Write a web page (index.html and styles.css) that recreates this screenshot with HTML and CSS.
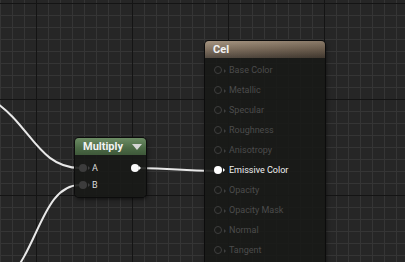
FILE: index.html
```html
<!DOCTYPE html>
<html lang="en">
<head>
    <meta charset="UTF-8">
    <title>Material Graph</title>
    <link rel="stylesheet" href="styles.css">
</head>
<body>
    <div class="graph">
        <svg class="wires" width="405" height="262" viewBox="0 0 405 262">
            <path d="M -70 84 C 30 84 22 168 80 168" />
            <path d="M -40 300 C 40 300 30 185 80 185" />
            <path d="M 136 168 C 178 168 176 171 216 171" />
        </svg>

        <div class="node multiply">
            <div class="node-header">
                <span class="node-title">Multiply</span>
                <span class="caret"></span>
            </div>
            <div class="node-body">
                <div class="row">
                    <div class="pin-in">
                        <span class="pin filled"></span>
                        <span class="label">A</span>
                    </div>
                    <span class="pin out"></span>
                </div>
                <div class="row">
                    <div class="pin-in">
                        <span class="pin filled"></span>
                        <span class="label">B</span>
                    </div>
                </div>
            </div>
        </div>

        <div class="node cel">
            <div class="node-header">
                <span class="node-title">Cel</span>
            </div>
            <div class="node-body">
                <div class="input"><span class="pin ring"></span><span class="label">Base Color</span></div>
                <div class="input"><span class="pin ring"></span><span class="label">Metallic</span></div>
                <div class="input"><span class="pin ring"></span><span class="label">Specular</span></div>
                <div class="input"><span class="pin ring"></span><span class="label">Roughness</span></div>
                <div class="input"><span class="pin ring"></span><span class="label">Anisotropy</span></div>
                <div class="input active"><span class="pin lit"></span><span class="label">Emissive Color</span></div>
                <div class="input"><span class="pin ring"></span><span class="label">Opacity</span></div>
                <div class="input"><span class="pin ring"></span><span class="label">Opacity Mask</span></div>
                <div class="input"><span class="pin ring"></span><span class="label">Normal</span></div>
                <div class="input"><span class="pin ring"></span><span class="label">Tangent</span></div>
            </div>
        </div>
    </div>
</body>
</html>
```

FILE: styles.css
```css
body {
    margin: 0;
    overflow: hidden;
    font-family: Roboto, "Liberation Sans", sans-serif;
}
.graph {
    position: relative;
    width: 405px;
    height: 262px;
    overflow: hidden;
    background-color: #262626;
    background-image:
        linear-gradient(#141414 1px, transparent 1px),
        linear-gradient(90deg, #141414 1px, transparent 1px),
        linear-gradient(#353535 1px, transparent 1px),
        linear-gradient(90deg, #353535 1px, transparent 1px);
    background-size: 96px 96px, 96px 96px, 12px 12px, 12px 12px;
    background-position: 0 3px, 36px 0, 0 3px, 0 0;
}
.wires {
    position: absolute;
    left: 0;
    top: 0;
}
.wires path {
    fill: none;
    stroke: #e8e8e8;
    stroke-width: 2;
}
.node {
    position: absolute;
    border-radius: 4px;
    background: rgba(24, 26, 23, 0.9);
    box-shadow: 0 0 0 1px #0c0c0c, 1px 2px 4px rgba(0, 0, 0, 0.6);
}
.node-header {
    height: 17px;
    display: flex;
    align-items: center;
    border-radius: 4px 4px 0 0;
    padding: 0 8px;
}
.node-title {
    color: #f2f2f2;
    font-weight: bold;
    font-size: 11px;
}
.multiply {
    left: 75px;
    top: 138px;
    width: 71px;
    height: 59px;
}
.multiply .node-header {
    justify-content: space-between;
    padding-right: 4px;
    background: linear-gradient(#6c8c64, #4c6a46 60%, #3e5839);
}
.caret {
    width: 0;
    height: 0;
    border-left: 5px solid transparent;
    border-right: 5px solid transparent;
    border-top: 6px solid #d6d6d6;
}
.multiply .node-body {
    padding: 4px 0 0 4px;
}
.row {
    height: 17px;
    display: flex;
    align-items: center;
    justify-content: space-between;
}
.pin-in {
    display: flex;
    align-items: center;
    gap: 5px;
}
.label {
    font-size: 9px;
    color: #dcdcdc;
}
.pin {
    position: relative;
    width: 8px;
    height: 8px;
    border-radius: 50%;
    box-sizing: border-box;
    flex: none;
}
.pin::after {
    content: "";
    position: absolute;
    top: 2px;
    left: 9px;
    border-top: 2px solid transparent;
    border-bottom: 2px solid transparent;
    border-left: 2px solid #3f3f3f;
}
.pin.filled {
    background: #3c3c3c;
}
.pin.out {
    background: #fafafa;
    margin-right: 7px;
}
.pin.out::after {
    left: 8px;
    border-left-color: #fafafa;
}
.cel {
    left: 205px;
    top: 41px;
    width: 120px;
    height: 240px;
}
.cel .node-header {
    background:
        linear-gradient(90deg, rgba(255, 255, 255, 0.06), rgba(0, 0, 0, 0.15)),
        linear-gradient(#a18f7a, #7d6c5a 45%, #4a4036);
}
.cel .node-body {
    padding: 2px 0 0 9px;
}
.input {
    height: 20px;
    display: flex;
    align-items: center;
    gap: 7px;
}
.input .label {
    color: #4b4b4b;
}
.input.active .label {
    color: #f0f0f0;
}
.pin.ring {
    border: 1.5px solid #3e3e3e;
}
.pin.lit {
    background: #ffffff;
}
.pin.lit::after {
    border-left-color: #ffffff;
}
```
